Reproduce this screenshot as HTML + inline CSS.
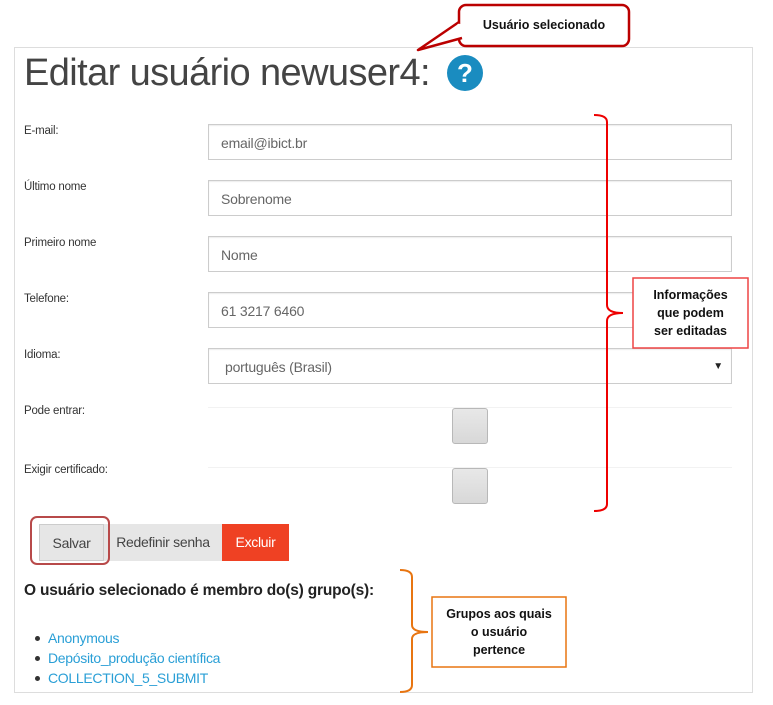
<!DOCTYPE html>
<html><head><meta charset="utf-8"><style>
*{margin:0;padding:0;box-sizing:border-box}
body{width:773px;height:705px;background:#fff;position:relative;overflow:hidden;font-family:"Liberation Sans",sans-serif}
.a{position:absolute}
.panel{left:14px;top:47px;width:739px;height:646px;border:1px solid #ddd}
.lbl{left:24px;font-size:11.5px;color:#333;letter-spacing:-0.2px}
.inp{left:208px;width:524px;height:36px;border:1px solid #ccc;box-shadow:inset 0 1px 1px rgba(0,0,0,.08);font-size:14px;color:#666;padding:10px 12px;line-height:16px;letter-spacing:-0.2px}
.cbrow{left:208px;width:524px;height:37px;border-top:1px solid #f2f2f2}
.cb{left:452px;width:36px;height:36px;background:linear-gradient(#e8e8e8,#d8d8d8);border:1px solid #b8b8b8;border-radius:3px}
.btn{top:524px;height:37px;font-size:14px;line-height:37px;text-align:center;letter-spacing:-0.3px}
.li{left:48px;font-size:14px;color:#2a9fd6;letter-spacing:-0.3px}
.dot{left:35px;width:5px;height:5px;border-radius:50%;background:#333}
.cal{font-family:"Liberation Sans",sans-serif;font-weight:bold;font-size:12.5px;color:#111;text-align:center}
</style></head><body>
<div class="a panel"></div>
<div class="a" style="left:24px;top:52px;font-size:38px;color:#444;letter-spacing:-0.6px">Editar usuário newuser4:</div>
<div class="a" style="left:447px;top:55px;width:36px;height:36px;border-radius:50%;background:#1a8cc0;color:#fff;font-weight:bold;font-size:26px;text-align:center;line-height:36px">?</div>

<div class="a lbl" style="top:125px">E-mail:</div>
<div class="a inp" style="top:124px">email@ibict.br</div>
<div class="a lbl" style="top:181px">Último nome</div>
<div class="a inp" style="top:180px">Sobrenome</div>
<div class="a lbl" style="top:237px">Primeiro nome</div>
<div class="a inp" style="top:236px">Nome</div>
<div class="a lbl" style="top:293px">Telefone:</div>
<div class="a inp" style="top:292px">61 3217 6460</div>
<div class="a lbl" style="top:349px">Idioma:</div>
<div class="a inp" style="top:348px;padding-left:16px">português (Brasil)<span style="position:absolute;right:8px;top:10px;font-size:10px;color:#222">▼</span></div>
<div class="a lbl" style="top:405px">Pode entrar:</div>
<div class="a cbrow" style="top:407px"></div>
<div class="a cb" style="top:408px"></div>
<div class="a lbl" style="top:464px">Exigir certificado:</div>
<div class="a cbrow" style="top:467px"></div>
<div class="a cb" style="top:468px"></div>

<div class="a btn" style="left:39px;width:65px;background:#e6e6e6;border:1px solid #ccc;color:#444">Salvar</div>
<div class="a btn" style="left:104px;width:118px;background:#e6e6e6;color:#444">Redefinir senha</div>
<div class="a btn" style="left:222px;width:67px;background:#ef4123;color:#fff">Excluir</div>
<div class="a" style="left:30px;top:516px;width:80px;height:49px;border:2px solid #b84a4a;border-radius:7px"></div>

<div class="a" style="left:24px;top:582px;font-size:15.5px;font-weight:bold;color:#222;letter-spacing:-0.2px">O usuário selecionado é membro do(s) grupo(s):</div>
<div class="a dot" style="top:636px"></div><div class="a li" style="top:630px">Anonymous</div>
<div class="a dot" style="top:656px"></div><div class="a li" style="top:650px">Depósito_produção científica</div>
<div class="a dot" style="top:676px"></div><div class="a li" style="top:670px">COLLECTION_5_SUBMIT</div>

<svg class="a" style="left:0;top:0" width="773" height="705">
<rect x="459" y="5" width="170" height="41" rx="7" fill="#fff" stroke="#b00" stroke-width="2.5"/>
<path d="M459 22 L418 50 L462 38" fill="#fff" stroke="#b00" stroke-width="2.5" stroke-linejoin="round"/>
<path d="M459 24 L459 37" stroke="#fff" stroke-width="3"/>
<path d="M594 115 Q607 115 607 122 L607 305 Q607 313 623 313 Q607 313 607 321 L607 504 Q607 511 594 511" fill="none" stroke="#e00" stroke-width="2"/>
<rect x="633" y="278" width="115" height="70" fill="#fff" stroke="#e44" stroke-width="1.5"/>
<path d="M400 570 Q412 570 412 577 L412 625 Q412 632 428 632 Q412 632 412 639 L412 685 Q412 692 400 692" fill="none" stroke="#e87511" stroke-width="2"/>
<rect x="432" y="597" width="134" height="70" fill="#fff" stroke="#e87511" stroke-width="1.5"/>
</svg>
<div class="a cal" style="left:459px;top:18px;width:170px">Usuário selecionado</div>
<div class="a cal" style="left:633px;top:286px;width:115px;line-height:18px">Informações<br>que podem<br>ser editadas</div>
<div class="a cal" style="left:432px;top:605px;width:134px;line-height:18px">Grupos aos quais<br>o usuário<br>pertence</div>
</body></html>
